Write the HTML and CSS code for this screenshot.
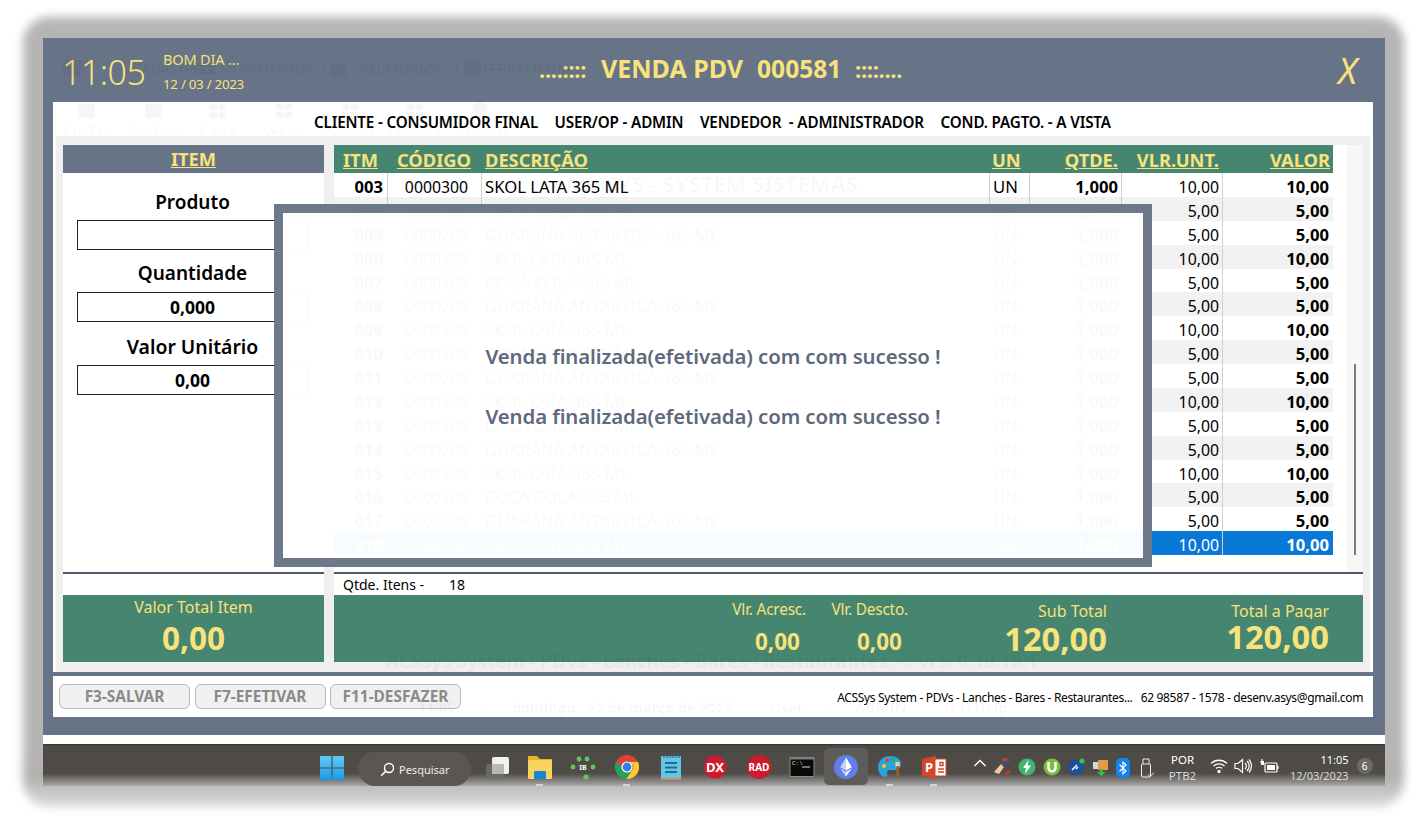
FILE: index.html
```html
<!DOCTYPE html>
<html lang="pt-BR">
<head>
<meta charset="utf-8">
<title>VENDA PDV</title>
<link rel="stylesheet" href="styles.css">
</head>
<body>
<div class="shell">
  <div class="window">
    <header class="titlebar">
      <div class="clock">11:05</div>
      <div class="greet"><span class="greet-a">BOM DIA ...</span><span class="greet-b">12 / 03 / 2023</span></div>
      <div class="title"><span class="dots">....::::</span><span class="t-name">VENDA PDV</span><span class="t-num">000581</span><span class="dots">::::....</span></div>
      <div class="close">X</div>
    </header>
    <div class="client">
      <div class="infobar">
        <span>CLIENTE - CONSUMIDOR FINAL</span><span>USER/OP - ADMIN</span><span>VENDEDOR &nbsp;- ADMINISTRADOR</span><span>COND. PAGTO. - A VISTA</span>
      </div>
      <div class="main">
        <section class="left">
          <h2 class="left-head">ITEM</h2>
          <div class="left-body">
            <label class="f-label f-first">Produto</label>
            <div class="f-input"></div>
            <label class="f-label">Quantidade</label>
            <div class="f-input">0,000</div>
            <label class="f-label f-third">Valor Unitário</label>
            <div class="f-input">0,00</div>
          </div>
          <div class="under"></div>
          <div class="green total-item">
            <span class="ti-label">Valor Total Item</span>
            <span class="ti-value">0,00</span>
          </div>
        </section>
        <section class="right">
          <div class="grid-area">
            <div class="grid">
              <div class="row head">
                <span class="c-itm">ITM</span><span class="c-cod">CÓDIGO</span><span class="c-des">DESCRIÇÃO</span><span class="c-un">UN</span><span class="c-qt">QTDE.</span><span class="c-vu">VLR.UNT.</span><span class="c-va">VALOR</span>
              </div>
              <div class="rows">
                <div class="row"><span class="c-itm">003</span><span class="c-cod">0000300</span><span class="c-des">SKOL LATA 365 ML</span><span class="c-un">UN</span><span class="c-qt">1,000</span><span class="c-vu">10,00</span><span class="c-va">10,00</span></div>
                <div class="row alt"><span class="c-itm">004</span><span class="c-cod">0000100</span><span class="c-des">COCA COLA 365 ML</span><span class="c-un">UN</span><span class="c-qt">1,000</span><span class="c-vu">5,00</span><span class="c-va">5,00</span></div>
                <div class="row"><span class="c-itm">005</span><span class="c-cod">0000200</span><span class="c-des">GUARANA ANTARTICA 365 ML</span><span class="c-un">UN</span><span class="c-qt">1,000</span><span class="c-vu">5,00</span><span class="c-va">5,00</span></div>
                <div class="row alt"><span class="c-itm">006</span><span class="c-cod">0000300</span><span class="c-des">SKOL LATA 365 ML</span><span class="c-un">UN</span><span class="c-qt">1,000</span><span class="c-vu">10,00</span><span class="c-va">10,00</span></div>
                <div class="row"><span class="c-itm">007</span><span class="c-cod">0000100</span><span class="c-des">COCA COLA 365 ML</span><span class="c-un">UN</span><span class="c-qt">1,000</span><span class="c-vu">5,00</span><span class="c-va">5,00</span></div>
                <div class="row alt"><span class="c-itm">008</span><span class="c-cod">0000200</span><span class="c-des">GUARANA ANTARTICA 365 ML</span><span class="c-un">UN</span><span class="c-qt">1,000</span><span class="c-vu">5,00</span><span class="c-va">5,00</span></div>
                <div class="row"><span class="c-itm">009</span><span class="c-cod">0000300</span><span class="c-des">SKOL LATA 365 ML</span><span class="c-un">UN</span><span class="c-qt">1,000</span><span class="c-vu">10,00</span><span class="c-va">10,00</span></div>
                <div class="row alt"><span class="c-itm">010</span><span class="c-cod">0000100</span><span class="c-des">COCA COLA 365 ML</span><span class="c-un">UN</span><span class="c-qt">1,000</span><span class="c-vu">5,00</span><span class="c-va">5,00</span></div>
                <div class="row"><span class="c-itm">011</span><span class="c-cod">0000200</span><span class="c-des">GUARANA ANTARTICA 365 ML</span><span class="c-un">UN</span><span class="c-qt">1,000</span><span class="c-vu">5,00</span><span class="c-va">5,00</span></div>
                <div class="row alt"><span class="c-itm">012</span><span class="c-cod">0000300</span><span class="c-des">SKOL LATA 365 ML</span><span class="c-un">UN</span><span class="c-qt">1,000</span><span class="c-vu">10,00</span><span class="c-va">10,00</span></div>
                <div class="row"><span class="c-itm">013</span><span class="c-cod">0000100</span><span class="c-des">COCA COLA 365 ML</span><span class="c-un">UN</span><span class="c-qt">1,000</span><span class="c-vu">5,00</span><span class="c-va">5,00</span></div>
                <div class="row alt"><span class="c-itm">014</span><span class="c-cod">0000200</span><span class="c-des">GUARANA ANTARTICA 365 ML</span><span class="c-un">UN</span><span class="c-qt">1,000</span><span class="c-vu">5,00</span><span class="c-va">5,00</span></div>
                <div class="row"><span class="c-itm">015</span><span class="c-cod">0000300</span><span class="c-des">SKOL LATA 365 ML</span><span class="c-un">UN</span><span class="c-qt">1,000</span><span class="c-vu">10,00</span><span class="c-va">10,00</span></div>
                <div class="row alt"><span class="c-itm">016</span><span class="c-cod">0000100</span><span class="c-des">COCA COLA 365 ML</span><span class="c-un">UN</span><span class="c-qt">1,000</span><span class="c-vu">5,00</span><span class="c-va">5,00</span></div>
                <div class="row"><span class="c-itm">017</span><span class="c-cod">0000200</span><span class="c-des">GUARANA ANTARTICA 365 ML</span><span class="c-un">UN</span><span class="c-qt">1,000</span><span class="c-vu">5,00</span><span class="c-va">5,00</span></div>
                <div class="row sel"><span class="c-itm">018</span><span class="c-cod">0000300</span><span class="c-des">SKOL LATA 365 ML</span><span class="c-un">UN</span><span class="c-qt">1,000</span><span class="c-vu">10,00</span><span class="c-va">10,00</span></div>
              </div>
            </div>
            <div class="track"><div class="thumb"></div></div>
          </div>
          <div class="under qtd"><span class="qtd-a">Qtde. Itens -</span><span class="qtd-b">18</span></div>
          <div class="green totals">
            <div class="tot tot-a"><span class="t-small">Vlr. Acresc.</span><span class="v-small">0,00</span></div>
            <div class="tot tot-b"><span class="t-small">Vlr. Descto.</span><span class="v-small">0,00</span></div>
            <div class="tot tot-c"><span class="t-big">Sub Total</span><span class="v-big">120,00</span></div>
            <div class="tot tot-d"><span class="t-big clip">Total a Pagar</span><span class="v-big">120,00</span></div>
          </div>
        </section>
      </div>
    </div>
    <footer class="footbar">
      <button class="btn">F3-SALVAR</button>
      <button class="btn">F7-EFETIVAR</button>
      <button class="btn">F11-DESFAZER</button>
      <div class="contact">ACSSys System - PDVs - Lanches - Bares - Restaurantes... &nbsp; 62 98587 - 1578 - desenv.asys@gmail.com</div>
    </footer>
  </div>
  <div class="strip"></div>
  <div class="taskbar">
    <svg class="ic start" width="24" height="24" viewBox="0 0 24 24"><defs><linearGradient id="w" x1="0" y1="0" x2="0" y2="1"><stop offset="0" stop-color="#5ccbf5"/><stop offset="1" stop-color="#1c98e8"/></linearGradient></defs><path fill="url(#w)" d="M0 1a1 1 0 0 1 1-1h10.400v11.400H0zM12.600 0H23a1 1 0 0 1 1 1v10.400H12.600zM0 12.600h11.400V24H1a1 1 0 0 1-1-1zM12.600 12.600H24V23a1 1 0 0 1-1 1H12.600z"/></svg>
    <div class="search">
      <svg width="15" height="15" viewBox="0 0 15 15" fill="none" stroke="#fff" stroke-width="1.500"><circle cx="9" cy="6" r="4.500"/><path d="M5.600 9.400 1.200 13.800"/></svg>
      <span>Pesquisar</span>
    </div>
    <div class="apps">
      <span class="app"><svg width="26" height="26" viewBox="0 0 26 26"><rect x="9" y="3" width="17" height="17" rx="2" fill="#f1f1f1"/><rect x="3" y="10" width="18" height="15" rx="2" fill="#6f6d6a" opacity=".85"/><rect x="9" y="10" width="12" height="10" fill="#b9b8b6"/></svg></span>
      <span class="app run"><svg width="26" height="26" viewBox="0 0 26 26"><path fill="#e9b330" d="M1 3a1 1 0 0 1 1-1h8l3 3h11a1 1 0 0 1 1 1v4H1z"/><rect x="1" y="6" width="24" height="19" rx="1" fill="#f9d45c"/><rect x="7" y="17" width="12" height="8" rx="1" fill="#1b87cf"/></svg></span>
      <span class="app"><svg width="26" height="26" viewBox="0 0 26 26"><g fill="#63c75b"><circle cx="9" cy="5" r="2.400"/><circle cx="17" cy="5" r="2.400"/><circle cx="3" cy="13" r="2.400"/><circle cx="23" cy="13" r="2.400"/><circle cx="16" cy="23" r="2.600"/></g><text x="13" y="16" class="ib">IB</text></svg></span>
      <span class="app run"><svg width="26" height="26" viewBox="0 0 26 26"><circle cx="13" cy="13" r="12" fill="#dd4437"/><path fill="#1fa45a" d="M2.600 7A12 12 0 0 0 13 25L8 16z"/><path fill="#1fa45a" d="M2.600 7 8.500 17 13 25h1.500l5-8H13a5 5 0 0 1-4-1.500z"/><path fill="#fcc934" d="M13 8h11a12 12 0 0 1-11.500 17l6-9.500A5 5 0 0 0 17 9z"/><circle cx="13" cy="13" r="5.600" fill="#fff"/><circle cx="13" cy="13" r="4.400" fill="#2f7fe8"/></svg></span>
      <span class="app"><svg width="26" height="26" viewBox="0 0 26 26"><rect x="3" y="2" width="20" height="24" fill="#67c4e3"/><path stroke="#1a6f93" stroke-width="1.200" d="M6 1v3M9 1v3M12 1v3M15 1v3M18 1v3M21 1v3"/><path stroke="#1a6f93" stroke-width="2" d="M7 9h12M7 13.500h12M7 18h12"/><rect x="3" y="24" width="20" height="2" fill="#c9925a"/></svg></span>
      <span class="app"><svg width="26" height="26" viewBox="0 0 26 26"><circle cx="13" cy="13" r="11.500" fill="#cc1a2e"/><text x="13" y="18" class="badge dx">DX</text></svg></span>
      <span class="app"><svg width="26" height="26" viewBox="0 0 26 26"><circle cx="13" cy="13" r="12" fill="#cc1a2e"/><text x="13" y="17" class="badge rad">RAD</text></svg></span>
      <span class="app"><svg width="26" height="26" viewBox="0 0 26 26"><rect x="1" y="3.500" width="24" height="19" fill="#0a0a0a" stroke="#8a8a8a"/><rect x="1" y="3.500" width="24" height="2" fill="#7c7c7c"/><text x="3" y="11" class="cmd">C:\</text><path stroke="#ddd" d="M13 13h8"/></svg></span>
      <span class="app eth"><svg width="26" height="26" viewBox="0 0 26 26"><circle cx="13" cy="13" r="12" fill="#627eea"/><path fill="#fff" opacity=".65" d="M13 3.500 7.200 13.200 13 16.600z"/><path fill="#fff" d="M13 3.500 18.800 13.200 13 16.600z"/><path fill="#fff" opacity=".65" d="M7.200 14.400 13 22.500v-4.700z"/><path fill="#fff" opacity=".9" d="M18.800 14.400 13 22.500v-4.700z"/></svg></span>
      <span class="app run"><svg width="26" height="26" viewBox="0 0 26 26"><path fill="#25a5d8" d="M13 2C6 2 1 7 1 13.500 1 19 5 23 8.500 23c2.500 0 2-2.500 1.500-4-.5-1.700 1-3 3-3h5c3 0 6-2.500 6-6.500C24 5 19 2 13 2z"/><circle cx="7" cy="12" r="2" fill="#f4c431"/><circle cx="10" cy="6.500" r="2" fill="#d9432f"/><circle cx="16" cy="6" r="2" fill="#3aa657"/><rect x="18.500" y="8" width="4" height="5" fill="#e7d4a4"/><rect x="19.500" y="12" width="2.400" height="13" fill="#9a6428"/></svg></span>
      <span class="app run"><svg width="26" height="26" viewBox="0 0 26 26"><path fill="#d24726" d="M1 5 15 2v23L1 22z"/><rect x="14" y="5" width="11" height="17" fill="#fff" stroke="#d24726" stroke-width="1"/><path stroke="#d24726" stroke-width="1.500" d="M19 8.500h3v3h-3zM17 15h6M17 18h6" fill="none"/><text x="4" y="18" class="ppt">P</text></svg></span>
    </div>
    <div class="tray">
      <svg class="ti" width="14" height="10" viewBox="0 0 14 10" fill="none" stroke="#fff" stroke-width="1.400"><path d="M1.500 8 7 2.500 12.500 8"/></svg>
      <svg class="ti" width="18" height="18" viewBox="0 0 18 18"><path fill="none" stroke="#d8342a" stroke-width="3" d="M15 3.500A7 7 0 0 0 8 2M15.500 13a7 7 0 0 1-4 3"/><path fill="#f0c9a0" d="M7 6l3 3-5 7-5-2z"/><path stroke="#2b58a8" stroke-width="2" d="M8 7l7-5"/></svg>
      <svg class="ti" width="18" height="18" viewBox="0 0 18 18"><circle cx="9" cy="9" r="8.500" fill="#3fb46f"/><path fill="#fff" d="M10.500 2 5 10h3l-1 6 6-8.500H9.800z"/></svg>
      <svg class="ti" width="18" height="18" viewBox="0 0 18 18"><circle cx="9" cy="9" r="8.500" fill="#7bbd3d"/><path fill="none" stroke="#fff" stroke-width="2.500" d="M5.500 4v6a3.500 3.500 0 0 0 7 0V4"/></svg>
      <svg class="ti" width="18" height="18" viewBox="0 0 18 18"><path fill="#1d4f9b" d="M5 2h8l5 7-5 8H5L0 9z"/><circle cx="15" cy="3" r="2.600" fill="#36c24a"/><path stroke="#fff" stroke-width="1.500" d="M5 12l5-5M9 11l2-2"/></svg>
      <svg class="ti" width="18" height="18" viewBox="0 0 18 18"><rect x="1" y="4" width="6" height="7" fill="#cfd8dc"/><rect x="6" y="2" width="10" height="10" fill="#e59a4a"/><path fill="#2fbb4f" d="M8 11h3v3h3l-4.500 4L5 14h3z"/></svg>
      <svg class="ti" width="14" height="20" viewBox="0 0 14 20"><rect width="14" height="20" rx="5" fill="#1483f0"/><path fill="none" stroke="#fff" stroke-width="1.100" d="M3.500 6.500 10 13l-3 3V4l3 3-6.500 6.500"/></svg>
      <svg class="ti usb" width="16" height="20" viewBox="0 0 16 20" fill="none" stroke="#eee" stroke-width="1"><rect x="2.500" y="6" width="9" height="13" rx="1"/><path d="M4 6V1h6v5M9 16.500l2 2 4-4"/></svg>
      <div class="lang"><span class="lang-a">POR</span><span class="lang-b">PTB2</span></div>
      <svg class="ti" width="18" height="16" viewBox="0 0 18 16" fill="none" stroke="#fff" stroke-width="1.300"><path d="M1 5.500a11.500 11.500 0 0 1 16 0M3.500 8a8 8 0 0 1 11 0M6 10.500a4.300 4.300 0 0 1 6 0"/><circle cx="9" cy="13.500" r="1" fill="#fff"/></svg>
      <svg class="ti" width="18" height="16" viewBox="0 0 18 16" fill="none" stroke="#fff" stroke-width="1.200"><path d="M1 5.500h3L8.500 1.500v13L4 10.500H1zM11 5a4 4 0 0 1 0 6M13 3a7 7 0 0 1 0 10M15 1.500a10 10 0 0 1 0 13"/></svg>
      <svg class="ti" width="20" height="16" viewBox="0 0 20 16"><path fill="none" stroke="#fff" stroke-width="1.200" d="M1 4h4M3 1v3"/><rect x="2" y="3" width="3" height="4" fill="#fff"/><rect x="6" y="5" width="12" height="9" rx="1" fill="none" stroke="#fff" stroke-width="1.200"/><rect x="8" y="7" width="8" height="5" fill="#fff"/><rect x="18" y="8" width="1.500" height="3" fill="#fff"/></svg>
      <div class="datetime"><span class="dt-a">11:05</span><span class="dt-b">12/03/2023</span></div>
      <div class="notif">6</div>
    </div>
  </div>

  <svg class="ghost g-icons" width="480" height="84" viewBox="0 0 480 84">
    <g class="gi-dark">
      <path d="M20 22h19v16H20zM157 24h7v6h-7zM165 24h7v6h-7zM157 31h7v6h-7zM165 31h7v6h-7zM287 24l8 2 8-2v14l-8 2-8-2zM422 22h7v7h-7zM431 22h7v7h-7zM422 30h16v8h-16z"/>
      <path d="M280 20h1v20h-1zM413 20h1v20h-1z"/>
    </g>
    <g class="gi-light">
      <path d="M35 66h17v14H35zM102 66h17v14h-17zM167 66h7v6h-7zM176 66h7v6h-7zM167 74h7v6h-7zM176 74h7v6h-7zM233 66h7v6h-7zM242 66h7v6h-7zM233 74h7v6h-7zM242 74h7v6h-7zM299 66h7v6h-7zM308 66h7v6h-7zM299 74h7v6h-7zM308 74h7v6h-7zM364 66h7v6h-7zM373 66h7v6h-7zM364 74h7v6h-7zM373 74h7v6h-7z"/>
      <circle cx="437" cy="72" r="8"/>
    </g>
  </svg>
  <div class="ghost g-menu g-m1">CADASTROS</div>
  <div class="ghost g-menu g-m2">MOVIMENTOS</div>
  <div class="ghost g-menu g-m3">RELATÓRIOS</div>
  <div class="ghost g-menu g-m4">FERRAMENTAS</div>
  <div class="ghost g-tool g-t1">Cts/Frs</div>
  <div class="ghost g-tool g-t2">Prodtos</div>
  <div class="ghost g-tool g-t3">Caixa</div>
  <div class="ghost g-tool g-t4">Venda</div>
  <div class="ghost g-tool g-t5">Mesa/At</div>
  <div class="ghost g-tool g-t6">Cozinha</div>
  <div class="ghost g-tool g-t7">Suporte</div>
  <div class="ghost g-brand">ACSSYS - SYSTEM SISTEMAS.</div>
  <div class="ghost g-line1">ACSSys System - PDVs - Lanches - Bares - Restaurantes. © vrs. 0.18.18.1</div>
  <div class="ghost g-line2 g-l1">11:05</div>
  <div class="ghost g-line2 g-l2">-</div>
  <div class="ghost g-line2 g-l3">domingo , 12 de março de 2023</div>
  <div class="ghost g-line2 g-l4">User</div>
  <div class="ghost g-line2 g-l5">-</div>
  <div class="ghost g-line2 g-l6">ADMIN</div>
  <div class="ghost g-line2 g-l7">[F1] Help</div>

  <div class="modal">
    <p>Venda finalizada(efetivada) com com sucesso !</p>
    <p>Venda finalizada(efetivada) com com sucesso !</p>
  </div>
</div>
</body>
</html>
```

FILE: styles.css
```css
* { box-sizing: border-box; }
html, body { margin: 0; padding: 0; }
body {
  width: 1426px;
  height: 829px;
  overflow: hidden;
  background: #fff;
  font-family: "Noto Sans", "Open Sans", sans-serif;
  color: #000;
}
.shell {
  position: relative;
  isolation: isolate;
  width: 1342px;
  margin: 38px 0 0 43px;
}
.shell::before {
  content: "";
  position: absolute;
  z-index: -1;
  left: -20px;
  top: -21px;
  right: -19px;
  bottom: -21px;
  border-radius: 26px;
  background: linear-gradient(#b6b4b4 0 94%, #b0afae 96%, #dcdcdc 100%);
  filter: blur(5px);
}
.window {
  height: 697px;
  background: #677386;
  display: flex;
  flex-direction: column;
}
.titlebar {
  height: 64px;
  display: flex;
  align-items: center;
  position: relative;
  color: #f8e27b;
  padding-left: 19px;
}
.clock { font-size: 34px; font-weight: 300; width: 101px; letter-spacing: -0.5px; padding-top: 4px; }
.greet { display: flex; flex-direction: column; padding-top: 8px; width: 82px; white-space: nowrap; }
.greet-a { font-size: 14.600px; line-height: 20px; letter-spacing: -0.2px; }
.greet-b { font-size: 13.400px; line-height: 30px; letter-spacing: -0.3px; }
.title {
  display: flex;
  align-items: baseline;
  font-size: 25px;
  font-weight: 700;
  margin: -4px 0 0 294px;
  white-space: nowrap;
  width: 364px;
}
.dots { font-size: 22px; letter-spacing: -0.3px; width: 48px; }
.t-name { margin-left: 14px; width: 144px; }
.t-num { margin-left: 12px; width: 84px; font-size: 24.600px; }
.t-num + .dots { margin-left: 14px; }
.close {
  font-size: 36px;
  font-style: italic;
  font-weight: 400;
  margin-left: auto;
  margin-right: 28px;
}
.client {
  height: 570px;
  margin: 0 12px 0 10px;
  background: #fff;
  padding: 0 3px;
  display: flex;
  flex-direction: column;
}
.infobar {
  height: 34px;
  padding: 8px 0 0 258px;
  display: flex;
  gap: 16.500px;
  font-size: 15.200px;
  font-weight: 600;
  line-height: 24px;
  white-space: pre;
  letter-spacing: -0.15px;
}
.main {
  height: 536px;
  background: #efefef;
  padding: 9px 7px 10px;
  display: grid;
  grid-template-columns: 261px 1029px;
  column-gap: 10px;
}
.left, .right { display: flex; flex-direction: column; min-width: 0; }
.left-head {
  margin: 0;
  height: 28px;
  background: #677386;
  color: #f8e27b;
  font-size: 18.300px;
  font-weight: 700;
  line-height: 28px;
  text-align: center;
  text-decoration: underline;
}
.left-body {
  height: 399px;
  background: #fff;
  display: flex;
  flex-direction: column;
  align-items: center;
  padding-right: 2px;
}
.f-label {
  font-size: 19px;
  font-weight: 600;
  line-height: 26px;
  height: 26px;
  margin-top: 10px;
  margin-bottom: 6px;
}
.f-first { margin-top: 16px; margin-bottom: 5px; }
.f-third { margin-top: 12px; margin-bottom: 5px; font-size: 19.400px; }
.f-input {
  width: 232px;
  height: 30px;
  border: 1px solid #222;
  font-size: 17.500px;
  font-weight: 700;
  line-height: 28px;
  text-align: center;
  background: #fff;
}
.under {
  height: 23px;
  background: #fff;
  border-top: 2px solid #4f5b6b;
}
.green { height: 67px; background: #468670; color: #f8e27b; }
.total-item { display: flex; flex-direction: column; align-items: center; }
.ti-label { font-size: 16px; line-height: 24px; }
.ti-value { font-size: 31.500px; font-weight: 700; line-height: 38px; }
.grid-area { height: 427px; display: flex; background: #fff; }
.grid { width: 999px; display: flex; flex-direction: column; }
.row {
  display: grid;
  grid-template-columns: 54px 94px 508px 40px 92px 101px 110px;
  grid-template-rows: 23.875px;
  height: 23.875px;
  flex: none;
  font-size: 15.800px;
  line-height: 28px;
  white-space: nowrap;
  background: #fff;
}
.rows { height: 382px; display: flex; flex-direction: column; }
.row span { border-right: 1px solid #cfcfcf; padding: 0 3px; overflow: hidden; }
.row.alt { background: #f2f2f2; }
.row.sel { background: #0a78d7; color: #fff; }
.c-itm { text-align: right; font-weight: 700; font-size: 16.600px; }
.row .c-itm { padding-right: 4px; }
.row .c-cod { text-align: center; padding-left: 7px; }
.row .c-des { padding-left: 3px; font-size: 16.700px; }
.row .c-un { padding-left: 3px; font-size: 16.700px; }
.c-qt, .c-vu, .c-va { text-align: right; }
.c-qt, .c-va { font-weight: 700; font-size: 16.600px; }
.row .c-va { border-right: 0; padding-right: 4px; }
.row.head {
  grid-template-rows: 28px;
  height: 28px;
  background: #468670;
  color: #f8e27b;
  font-weight: 700;
  line-height: 29px;
}
.row.head span { border: 0; text-decoration: underline; font-size: 18.300px; overflow: visible; }
.row.head .c-itm { text-align: left; padding-left: 9px; }
.row.head .c-cod { padding-left: 1px; }
.row.head .c-des { padding-left: 3px; }
.row.head .c-un { padding-left: 2px; }
.row.head .c-qt, .row.head .c-vu { padding-right: 4px; }
.row.head .c-va { padding-right: 3px; }
.track {
  width: 30px;
  padding: 219px 0 17px 21px;
  background: linear-gradient(90deg, #fff 14px, #f7f7f7 14px);
}
.thumb { width: 2px; height: 191px; background: #7a7a7a; }
.qtd { padding-left: 9px; font-size: 14px; line-height: 21px; display: flex; }
.qtd-a { width: 106px; }
.totals { display: flex; align-items: flex-start; }
.tot { display: flex; flex-direction: column; align-items: flex-end; }
.tot-a { width: 472px; }
.tot-b { width: 102px; }
.tot-c { width: 199px; }
.tot-d { width: 222px; }
.t-small { font-size: 15.400px; line-height: 30px; height: 30px; letter-spacing: -0.2px; }
.v-small { font-size: 22.500px; font-weight: 700; line-height: 34px; margin-right: 6px; }
.t-big { font-size: 16px; line-height: 32px; height: 26px; overflow: hidden; }
.t-big.clip { height: 24px; }
.v-big { font-size: 32.700px; font-weight: 700; line-height: 36px; }
.footbar {
  height: 41px;
  margin: 4px 12px 0 10px;
  background: #fff;
  display: flex;
  align-items: flex-start;
  padding: 8px 10px 0 6px;
  gap: 4.500px;
}
.btn {
  width: 131px;
  height: 25px;
  border: 1px solid #b9b9b9;
  border-radius: 6px;
  background: #f0f0f0;
  color: #8a8a8a;
  font-family: inherit;
  font-size: 15.400px;
  font-weight: 700;
  line-height: 22px;
  padding: 1px 0 0;
  white-space: nowrap;
}
.contact {
  margin-left: auto;
  font-size: 12px;
  line-height: 27px;
  white-space: nowrap;
  letter-spacing: -0.35px;
}
.strip { height: 9px; background: #fdfdfd; }
.taskbar {
  position: relative;
  height: 42px;
  background: linear-gradient(#33312e 0, #4e4b46 2px, #4f4c47 70%, #aaa9a8 100%);
  display: flex;
  align-items: flex-start;
  color: #fff;
}
.ic.start { margin: 12px 0 0 277px; }
.search {
  margin: 8px 0 0 14px;
  width: 113px;
  height: 34px;
  border-radius: 17px;
  background: #5a5752;
  display: flex;
  align-items: center;
  gap: 4px;
  padding-left: 22px;
  font-size: 11px;
  color: #eee;
}
.apps { display: flex; margin: 0 0 0 3px; padding-top: 4px; }
.app {
  position: relative;
  width: 43.800px;
  height: 37px;
  display: flex;
  align-items: center;
  justify-content: center;
}
.app.run::after {
  content: "";
  position: absolute;
  bottom: -1px;
  left: 18px;
  width: 7px;
  height: 2px;
  background: #d5d5d5;
}
.app.eth { background: #5e5c58; border-radius: 5px; }
.ib { font: 700 7px "Noto Sans", sans-serif; fill: #fff; text-anchor: middle; }
.badge { font-family: "Noto Sans", sans-serif; font-weight: 700; fill: #fff; text-anchor: middle; }
.dx { font-size: 13px; }
.rad { font-size: 10px; }
.cmd { font: 6px "Liberation Mono", monospace; fill: #ddd; }
.ppt { font: 700 13px "Noto Sans", sans-serif; fill: #fff; }
.tray {
  position: absolute;
  left: 930px;
  top: 0;
  height: 42px;
  right: 0;
  display: flex;
  align-items: flex-start;
  padding-top: 14px;
  gap: 6.500px;
}
.ti { flex: none; }
.usb { margin-left: 2.500px; }
.lang {
  width: 44px;
  margin: -6px -1.500px 0 -1px;
  display: flex;
  flex-direction: column;
  align-items: center;
  font-size: 11.500px;
  line-height: 16px;
}
.lang-b { color: #d9d9d9; }
.datetime {
  width: 70px;
  margin: -6px 0 0 -6.500px;
  display: flex;
  flex-direction: column;
  align-items: flex-end;
  font-size: 11px;
  line-height: 16px;
}
.dt-b { color: #d9d9d9; }
.notif {
  width: 16px;
  height: 16px;
  border-radius: 50%;
  background: #6a6966;
  font-size: 10px;
  line-height: 16px;
  text-align: center;
  margin: 0 0 0 1.500px;
}
.ghost {
  position: absolute;
  white-space: nowrap;
  pointer-events: none;
}
.g-icons { left: 0; top: 0; }
.gi-dark { fill: rgba(40, 50, 70, .07); }
.gi-light { fill: rgba(0, 0, 0, .035); }
.g-menu { top: 21px; font-size: 14px; color: rgba(40, 50, 70, .1); }
.g-m1 { left: 90px; }
.g-m2 { left: 177px; }
.g-m3 { left: 317px; }
.g-m4 { left: 440px; }
.g-tool { top: 84px; font-size: 14px; color: rgba(0, 0, 0, .04); }
.g-t1 { left: 21px; }
.g-t2 { left: 84px; }
.g-t3 { left: 157px; }
.g-t4 { left: 220px; }
.g-t5 { left: 277px; }
.g-t6 { left: 345px; }
.g-t7 { left: 415px; }
.g-brand { left: 522px; top: 130px; font-size: 22px; font-weight: 700; color: rgba(0, 60, 40, .03); }
.g-line1 { left: 343px; top: 610px; font-size: 18.800px; font-weight: 700; color: rgba(0, 0, 0, .045); }
.g-line2 { top: 660px; font-size: 14.400px; font-weight: 700; color: rgba(0, 0, 0, .035); }
.g-l1 { left: 375px; }
.g-l2 { left: 438px; }
.g-l3 { left: 469px; }
.g-l4 { left: 727px; }
.g-l5 { left: 782px; }
.g-l6 { left: 812px; }
.g-l7 { left: 902px; }
.modal {
  position: absolute;
  left: 231px;
  top: 166px;
  width: 878px;
  height: 363px;
  border: 9px solid rgba(107, 118, 136, .985);
  background: rgba(255, 255, 255, .975);
  display: flex;
  flex-direction: column;
  align-items: center;
  justify-content: center;
  gap: 33px;
  padding-top: 1px;
}
.modal p {
  margin: 0;
  font-size: 20.400px;
  font-weight: 600;
  line-height: 27px;
  color: #5e6a7c;
  letter-spacing: -0.1px;
}
```
